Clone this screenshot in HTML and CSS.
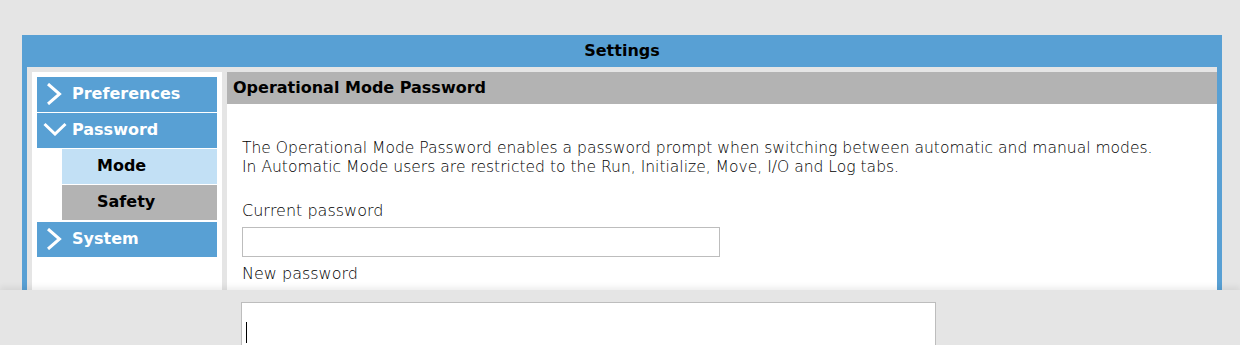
FILE: index.html
```html
<!DOCTYPE html>
<html>
<head>
<meta charset="utf-8">
<link rel="stylesheet" href="styles.css">
</head>
<body>
<div class="dialog">
  <div class="title">Settings</div>
  <div class="inner">
    <div class="sidebar">
      <div class="item top">
        <svg class="chev" width="16" height="22" viewBox="0 0 16 22"><path d="M2 1 L13.5 11 L2 21" fill="none" stroke="#fff" stroke-width="3"/></svg>
        <span>Preferences</span>
      </div>
      <div class="item top">
        <svg class="chev down" width="24" height="14" viewBox="0 0 24 14"><path d="M1.5 2 L12 12 L22.5 2" fill="none" stroke="#fff" stroke-width="3"/></svg>
        <span>Password</span>
      </div>
      <div class="item sub active"><span>Mode</span></div>
      <div class="item sub inactive"><span>Safety</span></div>
      <div class="item top last">
        <svg class="chev" width="16" height="22" viewBox="0 0 16 22"><path d="M2 1 L13.5 11 L2 21" fill="none" stroke="#fff" stroke-width="3"/></svg>
        <span>System</span>
      </div>
    </div>
    <div class="content">
      <div class="content-header">Operational Mode Password</div>
      <div class="content-body">
        <p class="desc">The Operational Mode Password enables a password prompt when switching between automatic and manual modes.<br>In Automatic Mode users are restricted to the Run, Initialize, Move, I/O and Log tabs.</p>
        <div class="label">Current password</div>
        <div class="field"></div>
        <div class="label label2">New password</div>
        <div class="field"></div>
      </div>
    </div>
  </div>
</div>
<div class="overlay">
  <div class="overlay-input"><span class="cursor"></span></div>
</div>
</body>
</html>
```
FILE: styles.css
```css
html, body {
  margin: 0;
  padding: 0;
}
body {
  width: 1240px;
  height: 345px;
  overflow: hidden;
  background: #e5e5e5;
  font-family: "DejaVu Sans", Verdana, sans-serif;
  color: #000;
  position: relative;
}
.dialog {
  margin: 35px 0 0 22px;
  width: 1190px;
  background: #58a0d4;
  padding: 0 5px 5px 5px;
}
.title {
  height: 32px;
  line-height: 32px;
  text-align: center;
  font-size: 16px;
  font-weight: bold;
}
.inner {
  background: #e5e5e5;
  padding: 5px 0 0 5px;
  display: flex;
  gap: 5px;
  height: 400px;
}
.sidebar {
  width: 180px;
  background: #fff;
  padding: 5px;
  display: flex;
  flex-direction: column;
  gap: 1px;
}
.item {
  height: 35px;
  display: flex;
  align-items: center;
  font-weight: bold;
  font-size: 16px;
  position: relative;
}
.item span {
  position: relative;
  top: -1px;
}
.item.top {
  background: #58a0d4;
  color: #fff;
  padding-left: 35px;
}
.item.last {
  margin-top: 1px;
}
.chev {
  position: absolute;
  left: 9px;
  top: 6px;
}
.chev.down {
  left: 6px;
  top: 9px;
}
.item.sub {
  margin-left: 25px;
  padding-left: 35px;
  color: #000;
}
.item.active {
  background: #c2e0f5;
}
.item.inactive {
  background: #b3b3b3;
}
.content {
  flex: 1;
  background: #fff;
}
.content-header {
  height: 32px;
  line-height: 32px;
  background: #b3b3b3;
  padding-left: 6px;
  font-size: 16px;
  font-weight: bold;
}
.content-body {
  padding: 35px 15px 0 15px;
  font-size: 16px;
  font-weight: 200;
  color: #000;
}
.desc {
  margin: 0;
  line-height: 19px;
  font-size: 15.55px;
}
.label {
  margin-top: 24px;
  line-height: 19px;
  height: 19px;
}
.field {
  margin-top: 7px;
  width: 476px;
  height: 28px;
  border: 1px solid #bdbdbd;
  background: #fff;
}
.label2 {
  margin-top: 7px;
}
.overlay {
  position: absolute;
  left: 0;
  top: 290px;
  width: 1240px;
  height: 55px;
  background: #e5e5e5;
  box-shadow: 0 -3px 6px rgba(0, 0, 0, 0.07);
}
.overlay-input {
  position: absolute;
  left: 241px;
  top: 12px;
  width: 693px;
  height: 60px;
  background: #fff;
  border: 1px solid #bdbdbd;
}
.cursor {
  position: absolute;
  left: 4px;
  top: 19px;
  width: 1px;
  height: 21px;
  background: #000;
}
```
